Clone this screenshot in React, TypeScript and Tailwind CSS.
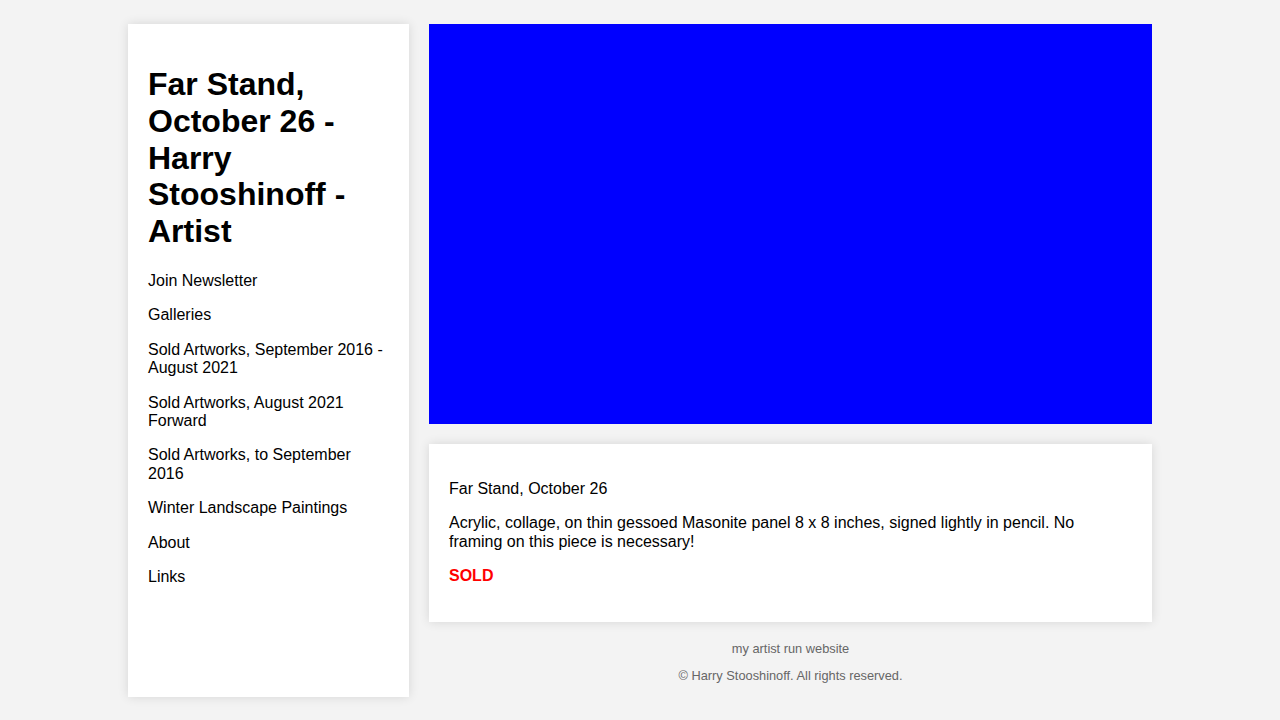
export default function App() {
  const links = [
    "Join Newsletter",
    "Galleries",
    "Sold Artworks, September 2016 - August 2021",
    "Sold Artworks, August 2021 Forward",
    "Sold Artworks, to September 2016",
    "Winter Landscape Paintings",
    "About",
    "Links",
  ];

  return (
    <div className="min-h-screen bg-[#f3f3f3] py-6 font-['Liberation_Sans',Arial,sans-serif] text-black">
      <div className="mx-auto flex w-[1024px] gap-5">
        {/* sidebar */}
        <aside className="w-[281px] shrink-0 bg-white px-5 pt-5 shadow-[0_0_10px_rgba(0,0,0,0.12)]">
          <h1 className="mt-[22px] mb-[22px] text-[32px] font-bold leading-[1.15]">
            Far Stand, October 26 - Harry Stooshinoff - Artist
          </h1>
          {links.map((l) => (
            <p key={l} className="my-4 text-base leading-[1.15]">
              {l}
            </p>
          ))}
        </aside>

        {/* main */}
        <main className="flex-1">
          <div className="h-[400px] w-full bg-[#0000ff]" />

          <div className="mt-5 bg-white px-5 py-5 text-base leading-[1.15] shadow-[0_0_10px_rgba(0,0,0,0.12)]">
            <p className="my-4">Far Stand, October 26</p>
            <p className="my-4">
              Acrylic, collage, on thin gessoed Masonite panel 8 x 8 inches, signed lightly in pencil. No framing on
              this piece is necessary!
            </p>
            <p className="my-4 font-bold text-[#ff0000]">SOLD</p>
          </div>

          <footer className="pt-5 pb-[12.8px] text-center text-[12.8px] leading-[1.15] text-[#666]">
            <p>my artist run website</p>
            <p className="mt-[13px]">© Harry Stooshinoff. All rights reserved.</p>
          </footer>
        </main>
      </div>
    </div>
  );
}
